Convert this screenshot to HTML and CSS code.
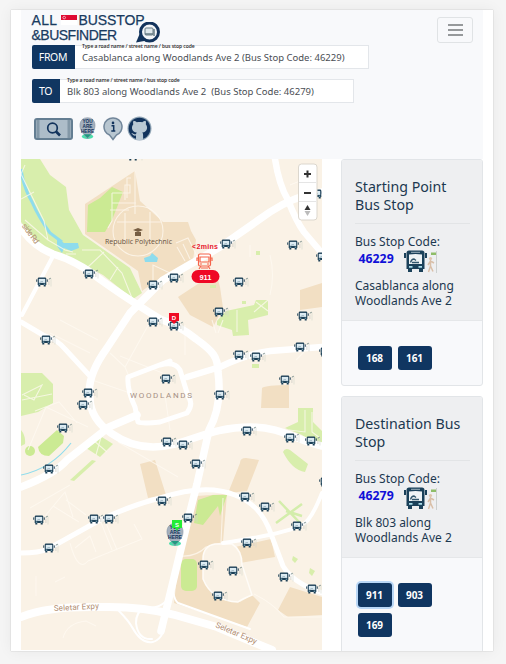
FILE: index.html
```html
<!DOCTYPE html>
<html lang="en">
<head>
<meta charset="utf-8">
<title>All SG BusStop &amp; BusFinder</title>
<link rel="stylesheet" href="styles.css">
</head>
<body>
<div class="window">
  <header class="navbar">
    <div class="brand-row">
      <div class="brand">
        <div class="brand-line"><span class="w-all">ALL</span><svg class="flag" viewBox="0 0 16 10"><path fill="#fff" d="M0 0h16v10H0z"/><path fill="#df0a32" d="M0 0h16v5H0z"/><circle cx="3.200" cy="2.600" r="1.300" fill="none" stroke="#fff" stroke-width=".6"/></svg><span class="w-stop">BUSSTOP</span></div>
        <div class="brand-line"><span class="w-finder">&amp;BUSFINDER</span></div>
      </div>
      <svg class="logo" viewBox="0 0 25 21"><path d="M0 20.500L4 11l7 7.500z" fill="#12335c"/><circle cx="13.500" cy="10" r="9" fill="#f3f6f9" stroke="#12335c" stroke-width="3"/><rect x="9" y="6" width="8" height="7" rx="1" fill="#dfe8ec" stroke="#667b84"/><path d="M9 12h8M18 7v7" stroke="#667b84" stroke-width="1.500"/></svg>
      <button class="toggler" aria-label="Menu"><i></i><i></i><i></i></button>
    </div>
    <div class="field from"><span class="tag">FROM</span><div class="input"><span class="hint">Type a road name / street name / bus stop code</span><span class="value">Casablanca along Woodlands Ave 2 (Bus Stop Code: 46229)</span></div></div>
    <div class="field to"><span class="tag">TO</span><div class="input"><span class="hint">Type a road name / street name / bus stop code</span><span class="value">Blk 803 along Woodlands Ave 2&nbsp; (Bus Stop Code: 46279)</span></div></div>
    <div class="tools">
      <svg class="t-search" viewBox="0 0 39 22"><rect x="1" y="1" width="37" height="20" rx="2" fill="#adbdc9" stroke="#647e92" stroke-width="2"/><path d="M4 2v18M35 2v18" stroke="#8398a7" stroke-width="3"/><circle cx="18.500" cy="10" r="4.800" fill="none" stroke="#12335c" stroke-width="1.700"/><path d="M22 13.500l4 4" stroke="#12335c" stroke-width="2.600"/></svg>
      <svg class="t-here" viewBox="0 0 18 24"><use href="#here"/></svg>
      <svg class="t-info" viewBox="0 0 20 24"><path d="M10 1a8.800 8.800 0 0 0-3.400 17l3.400 4.500 3.400-4.500A8.800 8.800 0 0 0 10 1z" fill="#b8c6d0" stroke="#71869a" stroke-width="1.500"/><circle cx="10" cy="5.900" r="1.300" fill="#12335c"/><path d="M8.500 8.700h2.200v5M8.300 14h4" fill="none" stroke="#12335c" stroke-width="1.500"/></svg>
      <svg class="t-git" viewBox="0 0 24 25"><circle cx="12" cy="12.500" r="12" fill="#91a6b6"/><circle cx="12" cy="12.500" r="10.800" fill="#12335c"/><path d="M8.500 23.500v-4c-3.500.8-3.300-2-5-2.500 2-.5 2.800 2 5 1.200.1-.8.4-1.200.8-1.600-5-.8-6-5.500-3.500-8.400-.4-1-.3-2.200.2-3.400 1.500 0 2.500.8 3.300 1.400 1.800-.4 3.700-.4 5.500 0 .8-.6 1.900-1.400 3.300-1.400.5 1.200.5 2.400.2 3.400 2.500 2.900 1.500 7.600-3.600 8.400.7.600.9 1.500.9 2.600v4.300a11 11 0 0 1-7.100 0z" fill="#b9c9d4"/></svg>
    </div>
  </header>
  <main class="content">
    <svg class="map" viewBox="21 159 301 491">
      <defs>
        <g id="bus"><path d="M-4.300-3.200q0-1.300 1.300-1.300h6q1.300 0 1.300 1.300v6.200h-.6v1.500h-2V3h-3.400v1.500h-2V3h-.6z" fill="#1d4057"/><path d="M-5.300-2.600v2.400M5.300-2.600v2.400" stroke="#193b52" stroke-width=".9"/><path d="M-3.200-3.100h6.400v4h-6.400z" fill="#dcebf2"/><path d="M-2.500.9l1.500-1.300h2" fill="none" stroke="#8aa5b3" stroke-width=".7"/><path d="M-3.200 2.200h1.500M1.700 2.200h1.500" stroke="#a9d2df" stroke-width=".8"/><path d="M9-3.500v8" stroke="#d5d6cf" stroke-width=".6"/><path d="M6.800-2.800l2-1" stroke="#6f8483" stroke-width=".9"/><path d="M6.900-1.300v4.300" stroke="#d3d1c8" stroke-width=".9"/></g>
        <g id="here"><ellipse cx="9" cy="20.500" rx="6" ry="2.500" fill="#4bdfac"/><path d="M9 .5C-.5.500-1.200 12 5 18l4 5 4-5C19.200 12 18.500.5 9 .5z" fill="#a4afbd" stroke="#8593a3" stroke-width=".6"/><path d="M5 18h8l-4 4z" fill="#1f9a80"/><text x="9" y="6.400" class="here-t">YOU</text><text x="9" y="11.400" class="here-t">ARE</text><text x="9" y="16.400" class="here-t">HERE</text></g>
        <g id="bus-large"><path d="M2.500 3q0-2.500 2.500-2.500h13q2.500 0 2.500 2.500v16H19v3h-4v-3H8v3H4v-3H2.500z" fill="#1b415a"/><path d="M1 3v5M22 3v5" stroke="#1b415a" stroke-width="2"/><path d="M5 4.500q6.500-1 13 0V14H5z" fill="#eef3f5"/><path d="M7 2.300h9" stroke="#9bb0bc" stroke-width="1"/><path d="M6.500 12.500q1-3.500 3.500-3.500l2 1.500M8 12.500h7" fill="none" stroke="#31566c" stroke-width="1.300"/><path d="M5 16.800h3.500M14.500 16.800H18" stroke="#a9dcea" stroke-width="1.800"/><circle cx="26.500" cy="8.500" r="1.600" fill="#dfc4ad"/><path d="M26.500 10v6l-2 6M26.500 16l2.500 5.500M24 15l2.500-4 3.500 2" fill="none" stroke="#d9bfa8" stroke-width="1.500"/><path d="M32.500 1v22" stroke="#ccd0cf"/><path d="M27 2.500h5v2.500h-5z" fill="#8fbd68"/></g>
      </defs>
      <path fill="#faf2e6" d="M21 159h301v491H21z"/>
      <g fill="#f2dfc3">
        <path d="M135 171L140 201 163 222 188 222 191 231 196 240 193 260 160 278 142 291 138 271 85 234 85 204z"/>
        <path d="M178 297L216 272 220 287 223 308 213 327 190 315zM300 290l22-7v24l-22 3zM262 388q4-3 27-3v23h-28zM240 463q0-5 6-5l13 2-12 31-19 2zM140 464l15-4 11 35-18 3z"/>
        <path d="M196 496l31-2-4 48-17 10-3 28 17 17 20 5 12-7 8 8-13 24-73-24 5-43zM235 547l36-8 4 18-35 6zM290 587l32 10v18l-34 2-10-7z"/>
      </g>
      <g fill="#d8eeac">
        <path d="M21 159h19l10 16 16 12 3 23 14 25 47 33 12 25-9 6-30-24-23-12-37-13-22-28zM21 373h21l11 11v19l-15 9-17 4zM21 430q5 6 4 14l-4 2z"/>
        <path d="M97 434l16 10-13 13-14-9z"/><path d="M217 321l9-10 28-6 2-5h12v15l-20 5 1 15-16 1-1-6-15-5z"/>
        <path d="M298 408h15v14l9 9v14l-14-6-6-4-17-7 13-6zM283 452q2-5 7-2l18 14-3 8q-13-2-22-20z"/><path d="M252 364h7v4h-7zM256 251h4v4h-4zM242 301h4v3h-4zM210 285h6v3h-6zM293 556l5 3-3 4-3-3zM310 568l5 3-3 5-3-3zM70 480l22-20 4 1-22 20z"/>
        <path d="M276 523l26-19M279 501l22 23M286 511l16 5" stroke="#d3edab" stroke-width="2.500"/>
      </g>
      <g fill="#cbea93"><path d="M88 205l12-7 12-11 11 5-11 28-7 12H87zM57 430l7 6-1 7-14 13q-10 0-11-9zM198 500l15-5 14 0-7 21-2-10-15 19-9-2z"/><circle cx="30" cy="451" r="5"/><rect x="181" y="559" width="16" height="32" rx="5"/></g>
      <g fill="none" stroke="#8edced"><path d="M21 169q2 17 11 33 7 16 18 31l12 9" stroke-width="3"/><path d="M21 475q30-6 50-32" stroke-width="1.200"/></g>
      <path fill="#8edced" d="M57 238l7 5 14 0 1 5-8 3-7-3-2 5-5-7zM144 258l6-2 2-3 6 5-1 4-12 0z"/>
      <g class="minor">
        <path d="M25 165l-4 9 23 47 4 19M21 199l13-7M25 220l23 20 17 10 8 2M82 250h18l22 23 12 30M66 254h10M88 267l16-15M110 280l8-13"/>
        <path d="M135 171v43M112 193h18v-8h-5v15M112 203h24M110 210h19M112 193v28l-4 7M131 178h-4v20M117 222h45M125 213v30M150 212v28"/>
        <circle cx="138" cy="231" r="25"/>
        <path d="M176 243l12-5 10 20M177 247l8 14M183 244l7 15M153 280v-15l17 8M290 185l20-8M270 255q5 20 0 40M250 245v12M296 360l8-8M60 320l38 20M50 333l40 20M92 380l38 13M110 353l15 14 25-45M120 356l50 20M185 325v30M125 367l5 12M28 450l18-43 42 20M35 411l24-9 18 21M22 395l20-10-8 15-10-5M22 400l30-6"/>
        <path d="M30 508l40-23M45 516l20-24 8 25M53 506l26 16M66 500l20 15M70 543q8 30 18 18l54-22-8-15M100 520l12 30M106 523l11 27M75 548l15-12 6 16M36 576v20M55 582l10-5M63 638q4-15 23-17l10 5M118 442l60 35M170 430l-5-35M93 440l14 12M101 437l-5 18M212 320l4 13M223 320l-5 13M237 310v22M256 302l12 9M268 300l-14 12M305 410v22l-16-2M312 412v20l8 6M181 556q15 1 25-9l15-4 2-45M235 563q3-14-5-19M254 594q20 10 30 23h38"/>
      </g>
      <path class="loop" d="M225 544h-10q-12 2-12 15v20q9 22 35 23 4-3 14-7l-10-30q0-15-10-21z"/>
      <g class="road">
        <path class="r7" d="M21 228q12 18 32 26 24 7 48 26 22 16 59 39 20 7 36 20c17 12 22 18 22 33 3 23 0 42-9 58l-12 54-10 40-15 62-11 45"/>
        <path class="r7" d="M322 192q-28 4-52 20l-50 35-57 33-33 33-23 35q-21 29-17 50c0 29 36 49 63 49 31 0 54-20 97-20 32 0 45 13 72 19"/>
        <path class="r6" d="M275 159q4 26 13 41 8 21 16 32l17 20M187 377l33-10q27-13 50-16l52-4"/>
        <path class="r5" d="M21 322l22 13q15 5 22 14l24 26M170 361l-42 16q-1 13 7 30l3 15q5 2 22 0l27-9q7-9 1-17l-8-26q-5-9-20-5"/>
        <path class="r4" d="M52 258l-30 57"/>
        <path class="r7" d="M137 415l-28 12-42 33q-12 14-46 27"/>
        <path class="r5" d="M21 553q18 0 27-4l52-29q32-15 60-22 46-15 75-3c18 7 29 19 36 39l12 32q10 17 39 27"/>
        <path class="r4" d="M223 543q61-9 79-18 9-4 20-32"/>
        <path class="r8" d="M21 617q26-11 79-10 42-1 75 8l42 12 55 23"/>
        <path class="r3" d="M118 610q10 10 14 17c13 24 31 17 33-3l5-30q-5 15-26 14-8 4-8 15 2 17 16 16M174 575q-3 22 4 28l72 26"/>
      </g>
      <text class="place" x="105" y="244" textLength="67">Republic Polytechnic</text>
      <path d="M133 230l5-2 5 2-5 2zM135 232h6v4h-6zM138 230v5" fill="#765d42"/>
      <text class="district" x="130" y="398" textLength="62">WOODLANDS</text>
      <g class="highway"><text x="54" y="611" textLength="45" transform="rotate(-3 54 611)">Seletar Expy</text><text x="215" y="627" textLength="44" transform="rotate(23 215 627)">Seletar Expy</text><text x="21.500" y="226" textLength="23" transform="rotate(53 21.500 226)">side Rd</text></g>
      <g id="stops"></g>
      <g transform="translate(166 523)"><use href="#here"/></g>
      <path d="M172 520h10v8h-3l-2 3-2-3h-3z" fill="#24ed35"/><text class="pin" x="177" y="527">S</text>
      <path d="M169 313h10v8h-2l-3 3-3-3h-2z" fill="#ef0b24"/><text class="pin" x="174" y="320">D</text>
      <text class="eta" x="192" y="249" textLength="26">&lt;2mins</text>
      <g fill="none" stroke="#f5644b" stroke-width="1.200"><rect x="198.500" y="254" width="12" height="12" rx="1.500"/><path d="M200 257h9v5h-9zM198 258h-1v3M211 258h1v3M201 266l-2 3M208 266l2 3M200 264h2M207 264h2M201 268h7"/></g>
      <rect x="191.500" y="270" width="28" height="13" rx="6.500" fill="#ef0825"/><text class="route" x="205.500" y="280">911</text>
      <g><rect x="298.500" y="164" width="18.500" height="56" rx="3" fill="#fff" stroke="#dcd7ce"/><path d="M299 182.500h17M299 201.500h17" stroke="#e5e5e5"/><path d="M304 174h7M307.500 170.500v7M304 193h7" stroke="#333" stroke-width="2"/><path d="M307.500 205l3 5h-6z" fill="#333"/><path d="M304.500 211h6l-3 5z" fill="#bbb"/></g>
    </svg>
    <aside class="side">
      <section class="card">
        <div class="card-head"><h2>Starting Point<br>Bus Stop</h2><hr><div class="code-label">Bus Stop Code:</div><div class="code"><b>46229</b><svg viewBox="0 0 34 24"><use href="#bus-large"/></svg></div><p>Casablanca along<br>Woodlands Ave 2</p></div>
        <div class="routes"><button>168</button><button>161</button></div>
      </section>
      <section class="card">
        <div class="card-head"><h2>Destination Bus<br>Stop</h2><hr><div class="code-label">Bus Stop Code:</div><div class="code"><b>46279</b><svg viewBox="0 0 34 24"><use href="#bus-large"/></svg></div><p>Blk 803 along<br>Woodlands Ave 2</p></div>
        <div class="routes"><button class="active">911</button><button>903</button><button>169</button></div>
      </section>
    </aside>
  </main>
</div>
<script src="map.js"></script>
</body>
</html>
```
FILE: styles.css
```css
* { box-sizing: border-box; }
body { margin: 0; height: 664px; padding: 10px 0 0 11px; background: #f5f5f5; font-family: "Noto Sans", sans-serif; color: #1c3850; overflow: hidden; }
.window { width: 482px; height: 641px; padding: 0 10px; background: #fff; overflow: hidden; box-shadow: 0 0 1px #aaa, 0 0 14px rgba(0,0,0,.06); }
.navbar { height: 149px; padding-left: 10.5px; background: #f8f9fb; }
.brand-row { display: flex; height: 35px; }
.brand { width: 104px; padding-top: 3px; font: 14px/15px "Liberation Sans", sans-serif; color: #193b60; white-space: nowrap; -webkit-text-stroke: .25px #193b60; }
.brand-line { display: flex; height: 15px; }
.brand-line > * { flex-shrink: 0; }
.w-all { width: 29px; letter-spacing: .3px; }
.flag { width: 16px; height: 10px; margin-top: 2px; margin-right: 2px; }
.w-stop { letter-spacing: -.1px; }
.w-finder { letter-spacing: -.5px; }
.logo { flex-shrink: 0; width: 25px; height: 21px; margin-top: 12px; }
.toggler { display: flex; flex-direction: column; align-items: center; justify-content: center; gap: 3px; width: 36px; height: 26px; margin: 7px 0 0 276.5px; padding: 0; background: none; border: 1px solid #e0e3e5; border-radius: 3px; }
.toggler i { width: 15px; height: 2px; background: #96999b; }
.field { display: flex; height: 24px; }
.from { width: 337px; }
.to { width: 322px; margin-top: 10px; }
.tag { width: 43px; background: #103661; color: #fff; font-size: 10.500px; line-height: 25px; text-align: center; border-radius: 2px 0 0 2px; letter-spacing: -.3px; }
.to .tag { width: 28px; }
.input { position: relative; flex: 1; padding-left: 7.5px; background: #fff; border: 1px solid #e3e6ea; border-left: 0; white-space: nowrap; color: #4a4e54; }
.value { display: block; font-size: 9.500px; line-height: 23px; letter-spacing: 0; }
.hint { position: absolute; left: 7.5px; top: -3px; font-size: 5px; line-height: 7px; font-weight: 600; color: #333; letter-spacing: -.07px; }
.tools { display: flex; align-items: center; height: 25px; margin: 13px 0 0 2px; }
.t-search { width: 39px; height: 22px; }
.t-here { width: 17px; height: 23px; margin-left: 6px; }
.t-info { width: 20px; height: 24px; margin-left: 7px; }
.t-git { width: 25px; height: 25px; margin-left: 4px; }
.content { display: flex; height: 491px; }
.map { display: block; flex: none; width: 301px; height: 491px; }
.side { flex: none; width: 142px; margin-left: 19px; }
.card { border: 1px solid #e2e5e8; border-radius: 3px; background: #f8f9fb; height: 227px; overflow: hidden; }
.card + .card { margin-top: 10px; height: 270px; }
.card-head { height: 161px; padding: 18px 12px 0 13px; background: #eeeff1; border-bottom: 1px solid #e5e7e9; }
h2 { margin: 0; font-size: 14.200px; line-height: 18px; font-weight: 400; white-space: nowrap; }
hr { border: 0; border-top: 1px solid #e2e4e6; margin: 9px 0 10px; }
.code-label { font-size: 12px; line-height: 16px; white-space: nowrap; }
.code { display: flex; height: 26px; padding-left: 3.5px; }
.code b { color: #1010d8; font-size: 12.300px; line-height: 18px; width: 45.5px; }
.code svg { width: 34px; height: 24px; }
p { margin: 2px 0 0; font-size: 12px; line-height: 15px; white-space: nowrap; }
.routes { display: flex; flex-wrap: wrap; gap: 6px; padding: 25px 40px 0 15.5px; }
.routes button { width: 34px; height: 24px; padding: 0; background: #103661; color: #fff; border: 0; border-radius: 3px; font: 700 10px/24px "Noto Sans", sans-serif; }
.routes .active { box-shadow: 0 0 0 2px #b9d7f6; }
.minor { fill: none; stroke: #fffaf2; stroke-width: 1.100; opacity: .75; }
.loop { fill: #faf2e6; stroke: #fffcf7; stroke-width: 1.500; }
.road { fill: none; stroke: #fff; stroke-linecap: round; stroke-linejoin: round; }
.r8 { stroke-width: 8px; } .r7 { stroke-width: 7.500px; } .r6 { stroke-width: 6.500px; } .r5 { stroke-width: 5px; } .r4 { stroke-width: 4px; } .r3 { stroke-width: 2px; }
.place { font: 7px "Open Sans", sans-serif; fill: #66513e; }
.district { font: 8px Roboto, sans-serif; fill: #a58f84; }
.highway { font: 8px Roboto, sans-serif; fill: #b18d70; }
.pin { font: 700 6px "Liberation Sans", sans-serif; fill: #fff; text-anchor: middle; }
.eta { font: 700 7px "Liberation Sans", sans-serif; fill: #e7172d; }
.route { font: 700 7.500px "Liberation Sans", sans-serif; fill: #fff; text-anchor: middle; }
.here-t { font: 700 5px "Liberation Sans", sans-serif; fill: #12335c; text-anchor: middle; }
```
FILE: map.js
```js
const stops = [
  [133,156],[42,282],[89,274],[153,285],[153,322],[226,244],[293,245],[322,257],[174,278],[239,282],[219,312],[303,316],[317,194],
  [46,340],[88,393],[83,405],[63,428],[49,469],[166,379],[174,326],[239,355],[256,357],[300,347],[325,352],[285,380],[220,395],
  [247,431],[290,438],[311,441],[167,442],[183,445],[196,464],[325,482],[39,520],[94,519],[109,519],[49,548],[162,501],[245,497],
  [265,507],[297,526],[188,518],[247,543],[204,565],[233,571],[284,577],[312,589],[218,596]
];
const ns = "http://www.w3.org/2000/svg";
const layer = document.getElementById("stops");
for (const [x, y] of stops) {
  const use = document.createElementNS(ns, "use");
  use.setAttribute("href", "#bus");
  use.setAttribute("transform", `translate(${x} ${y})`);
  layer.appendChild(use);
}
```
